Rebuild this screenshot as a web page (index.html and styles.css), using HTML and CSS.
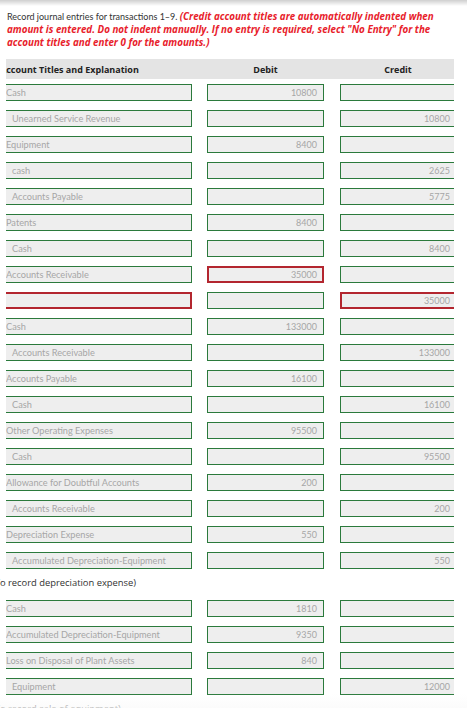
FILE: index.html
```html
<!DOCTYPE html>
<html>
<head>
<meta charset="utf-8">
<link rel="stylesheet" href="styles.css">
</head>
<body>
<div class="top-shadow"></div>
<p class="intro">Record journal entries for transactions 1–9. <span class="red">(Credit account titles are automatically indented when amount is entered. Do not indent manually. If no entry is required, select "No Entry" for the account titles and enter 0 for the amounts.)</span></p>

<div class="journal">
  <div class="head">
    <div class="cell acct"><span class="acct-title">Account Titles and Explanation</span></div>
    <div class="cell num-head">Debit</div>
    <div class="cell num-head">Credit</div>
  </div>

  <div class="rows">
    <div class="row"><div class="cell acct"><div class="field f-acct">Cash</div></div><div class="cell"><div class="field f-num">10800</div></div><div class="cell credit"><div class="field f-num"></div></div></div>
    <div class="row"><div class="cell acct"><div class="field f-acct indent">Unearned Service Revenue</div></div><div class="cell"><div class="field f-num"></div></div><div class="cell credit"><div class="field f-num">10800</div></div></div>
    <div class="row"><div class="cell acct"><div class="field f-acct">Equipment</div></div><div class="cell"><div class="field f-num">8400</div></div><div class="cell credit"><div class="field f-num"></div></div></div>
    <div class="row"><div class="cell acct"><div class="field f-acct indent">cash</div></div><div class="cell"><div class="field f-num"></div></div><div class="cell credit"><div class="field f-num">2625</div></div></div>
    <div class="row"><div class="cell acct"><div class="field f-acct indent">Accounts Payable</div></div><div class="cell"><div class="field f-num"></div></div><div class="cell credit"><div class="field f-num">5775</div></div></div>
    <div class="row"><div class="cell acct"><div class="field f-acct">Patents</div></div><div class="cell"><div class="field f-num">8400</div></div><div class="cell credit"><div class="field f-num"></div></div></div>
    <div class="row"><div class="cell acct"><div class="field f-acct indent">Cash</div></div><div class="cell"><div class="field f-num"></div></div><div class="cell credit"><div class="field f-num">8400</div></div></div>
    <div class="row"><div class="cell acct"><div class="field f-acct">Accounts Receivable</div></div><div class="cell"><div class="field f-num error">35000</div></div><div class="cell credit"><div class="field f-num"></div></div></div>
    <div class="row"><div class="cell acct"><div class="field f-acct error"></div></div><div class="cell"><div class="field f-num"></div></div><div class="cell credit"><div class="field f-num error">35000</div></div></div>
    <div class="row"><div class="cell acct"><div class="field f-acct">Cash</div></div><div class="cell"><div class="field f-num">133000</div></div><div class="cell credit"><div class="field f-num"></div></div></div>
    <div class="row"><div class="cell acct"><div class="field f-acct indent">Accounts Receivable</div></div><div class="cell"><div class="field f-num"></div></div><div class="cell credit"><div class="field f-num">133000</div></div></div>
    <div class="row"><div class="cell acct"><div class="field f-acct">Accounts Payable</div></div><div class="cell"><div class="field f-num">16100</div></div><div class="cell credit"><div class="field f-num"></div></div></div>
    <div class="row"><div class="cell acct"><div class="field f-acct indent">Cash</div></div><div class="cell"><div class="field f-num"></div></div><div class="cell credit"><div class="field f-num">16100</div></div></div>
    <div class="row"><div class="cell acct"><div class="field f-acct">Other Operating Expenses</div></div><div class="cell"><div class="field f-num">95500</div></div><div class="cell credit"><div class="field f-num"></div></div></div>
    <div class="row"><div class="cell acct"><div class="field f-acct indent">Cash</div></div><div class="cell"><div class="field f-num"></div></div><div class="cell credit"><div class="field f-num">95500</div></div></div>
    <div class="row"><div class="cell acct"><div class="field f-acct">Allowance for Doubtful Accounts</div></div><div class="cell"><div class="field f-num">200</div></div><div class="cell credit"><div class="field f-num"></div></div></div>
    <div class="row"><div class="cell acct"><div class="field f-acct indent">Accounts Receivable</div></div><div class="cell"><div class="field f-num"></div></div><div class="cell credit"><div class="field f-num">200</div></div></div>
    <div class="row"><div class="cell acct"><div class="field f-acct">Depreciation Expense</div></div><div class="cell"><div class="field f-num">550</div></div><div class="cell credit"><div class="field f-num"></div></div></div>
    <div class="row"><div class="cell acct"><div class="field f-acct indent">Accumulated Depreciation-Equipment</div></div><div class="cell"><div class="field f-num"></div></div><div class="cell credit"><div class="field f-num">550</div></div></div>
    <div class="explain">(To record depreciation expense)</div>
    <div class="row"><div class="cell acct"><div class="field f-acct">Cash</div></div><div class="cell"><div class="field f-num">1810</div></div><div class="cell credit"><div class="field f-num"></div></div></div>
    <div class="row"><div class="cell acct"><div class="field f-acct">Accumulated Depreciation-Equipment</div></div><div class="cell"><div class="field f-num">9350</div></div><div class="cell credit"><div class="field f-num"></div></div></div>
    <div class="row"><div class="cell acct"><div class="field f-acct">Loss on Disposal of Plant Assets</div></div><div class="cell"><div class="field f-num">840</div></div><div class="cell credit"><div class="field f-num"></div></div></div>
    <div class="row"><div class="cell acct"><div class="field f-acct indent">Equipment</div></div><div class="cell"><div class="field f-num"></div></div><div class="cell credit"><div class="field f-num">12000</div></div></div>
    <div class="explain">(To record sale of equipment)</div>
  </div>
</div>
<div class="bottom-fade"></div>
</body>
</html>
```

FILE: styles.css
```css
html, body {
  margin: 0;
  padding: 0;
  background: #ffffff;
  overflow: hidden;
}

body {
  font-family: Lato, "Liberation Sans", sans-serif;
  color: #333333;
  height: 708px;
}

.top-shadow {
  position: absolute;
  left: 0;
  top: 0;
  width: 100%;
  height: 6px;
  background: linear-gradient(to bottom, #cfcfcf, rgba(255, 255, 255, 0));
}

.intro {
  margin: 10px 14px 0 7px;
  font-size: 9px;
  line-height: 13px;
  color: #333333;
}

.red {
  color: #e8212b;
  font-family: "Open Sans", "Noto Sans", sans-serif;
  font-weight: 700;
  font-style: italic;
  font-size: 9.8px;
}

.journal {
  margin-top: 10px;
}

.head,
.row {
  display: grid;
  grid-template-columns: 186px 15px 117px 16px 114px;
  margin-left: 6px;
  width: 448px;
}

.row .cell:nth-child(2),
.head .cell:nth-child(2) {
  grid-column: 3;
}

.row .cell:nth-child(3),
.head .cell:nth-child(3) {
  grid-column: 5;
}

.head {
  height: 20px;
  background: #e4e4e4;
  align-items: center;
  font-family: "Open Sans", "Noto Sans", sans-serif;
  font-size: 9px;
  font-weight: 700;
  color: #222222;
}

.head .cell:nth-child(3) {
  padding-left: 2px;
}

.cell {
  overflow: hidden;
  white-space: nowrap;
}

.acct-title {
  display: inline-block;
  margin-left: -6px;
}

.num-head {
  text-align: center;
}

.rows {
  display: flex;
  flex-direction: column;
  gap: 9px;
  padding-top: 5px;
}

.field {
  box-sizing: border-box;
  height: 17px;
  border: 1px solid #2b7a3c;
  background: #eeeeee;
  font-size: 9.2px;
  line-height: 15px;
  color: #a6a6a6;
  white-space: nowrap;
  overflow: hidden;
}

.f-acct {
  width: 190px;
  margin-left: -4px;
  padding-left: 3px;
}

.f-acct.indent {
  padding-left: 9px;
}

.f-num {
  width: 117px;
  text-align: right;
  padding-right: 6px;
  font-size: 9px;
}

.field.error {
  border: 2px solid #b3262f;
  line-height: 13px;
}

.f-num.error {
  padding-right: 5px;
}

.explain {
  height: 13px;
  line-height: 9px;
  margin-left: -8px;
  font-family: "Open Sans", "Noto Sans", sans-serif;
  font-size: 9.4px;
  color: #333333;
  white-space: nowrap;
}

.bottom-fade {
  position: absolute;
  left: 0;
  bottom: 0;
  width: 100%;
  height: 14px;
  background: linear-gradient(to bottom, rgba(255, 255, 255, 0), rgba(250, 250, 250, 0.75));
}
```
